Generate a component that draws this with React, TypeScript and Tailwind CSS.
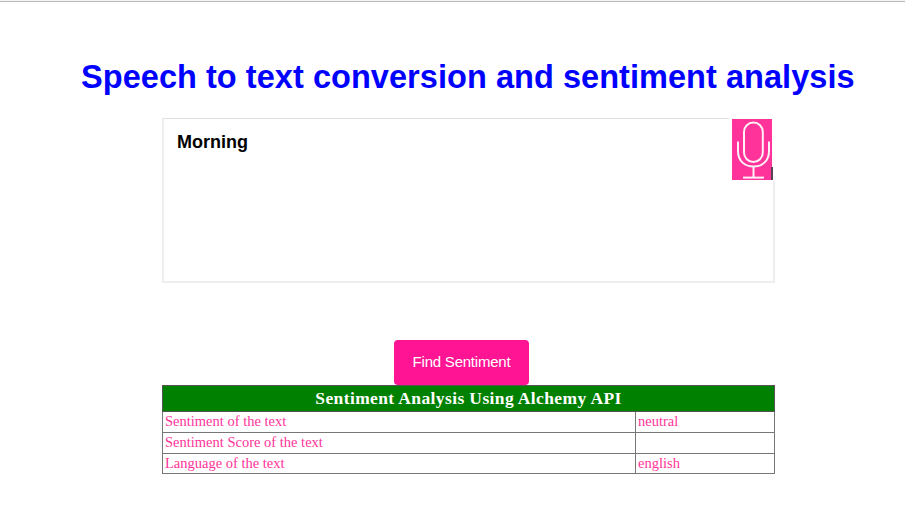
const rows = [
  { label: 'Sentiment of the text', value: 'neutral', height: 'h-[21px]' },
  { label: 'Sentiment Score of the text', value: '', height: 'h-[21px]' },
  { label: 'Language of the text', value: 'english', height: 'h-[20px]' },
];

function Microphone() {
  return (
    <svg className="block h-[61px] w-10" viewBox="0 0 40 61" fill="none" stroke="#fff0f8" strokeWidth="2">
      <rect x="12" y="3.500" width="18.800" height="39.500" rx="9.400" />
      <path d="M6 22.500v10c0 9 6.500 15 15.500 15S37 41.500 37 32.500v-10" />
      <path d="M21.500 47.500v11" />
      <path d="M11 58.600h21" />
    </svg>
  );
}

export default function App() {
  return (
    <div className="flex h-[512px] w-[905px] flex-col overflow-hidden bg-white">
      <div className="h-0.5 shrink-0 border-b border-[#bbbbbb] bg-[#f2f2f2]" />
      <h1 className="mt-[55px] ml-[81px] h-10 shrink-0 whitespace-nowrap font-['Liberation_Sans',Arial,sans-serif] text-[32.5px] leading-[41px] font-bold tracking-[0.05px] text-[#0000ff]">
        Speech to text conversion and sentiment analysis
      </h1>
      <div className="relative mt-[21px] ml-[162px] h-[165px] w-[613px] shrink-0 border-2 border-t border-[#eeeeee] border-t-[#dfdfdf]">
        <p className="mt-[11px] ml-[13px] font-['Liberation_Sans',Arial,sans-serif] text-[18px] leading-6 font-bold text-black">
          Morning
        </p>
        <div className="absolute -top-px -right-[2px] flex h-[63px] w-[46px] items-start bg-white pt-px pl-[3px]">
          <div className="h-[61px] w-10 bg-[#ff3399]">
            <Microphone />
          </div>
          <div className="mt-[48px] -ml-px h-[13px] w-[2px] bg-[#5a4452]" />
        </div>
      </div>
      <button className="mt-[57px] ml-[394px] h-[45px] w-[135px] shrink-0 rounded bg-[#ff1493] font-['Liberation_Sans',Arial,sans-serif] text-[15px] tracking-[-0.22px] text-white">
        Find Sentiment
      </button>
      <table className="ml-[162px] w-[613px] table-fixed border-collapse border border-[#555555] font-['Liberation_Serif','Times_New_Roman',serif] text-[14.5px] leading-4">
        <colgroup>
          <col className="w-[473px]" />
          <col />
        </colgroup>
        <thead>
          <tr className="h-[26px] bg-[#008000] text-[17.5px] tracking-[0.38px] text-white">
            <th colSpan={2} className="border border-[#555555] p-0 pb-px font-bold">
              Sentiment Analysis Using Alchemy API
            </th>
          </tr>
        </thead>
        <tbody>
          {rows.map((row) => (
            <tr key={row.label} className={`${row.height} text-[#ff3399]`}>
              <td className="border border-[#777777] pt-0 pr-0 pb-[2px] pl-[2px]">{row.label}</td>
              <td className="border border-[#777777] pt-0 pr-0 pb-[2px] pl-[2px]">{row.value}</td>
            </tr>
          ))}
        </tbody>
      </table>
    </div>
  );
}
